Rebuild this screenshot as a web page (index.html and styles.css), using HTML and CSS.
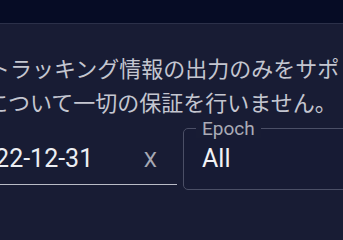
FILE: index.html
```html
<!DOCTYPE html>
<html lang="ja">
<head>
<meta charset="utf-8">
<link rel="stylesheet" href="styles.css">
</head>
<body>
<div class="topbar"></div>
<main class="content">
  <div class="notice">
    <div class="line line-first">ストラッキング情報の出力のみをサポ</div>
    <div class="line line-second">について一切の保証を行いません。</div>
  </div>
  <div class="filters">
    <div class="date-field">
      <span class="date-value">2022-12-31</span>
      <span class="clear">X</span>
    </div>
    <div class="select-box">
      <span class="select-label">Epoch</span>
      <span class="select-value">All</span>
    </div>
  </div>
</main>
</body>
</html>
```
FILE: styles.css
```css
html, body {
  margin: 0;
  padding: 0;
  background: #181c34;
}
body {
  width: 343px;
  height: 213px;
  overflow: hidden;
  font-family: Roboto, "Noto Sans CJK JP", sans-serif;
}
.topbar {
  height: 23px;
  background: #060c25;
  border-bottom: 1px solid #2b3049;
}
.content {
  overflow: hidden;
}
.notice {
  margin-top: 26px;
  font-family: "Noto Sans CJK JP", sans-serif;
  font-size: 22px;
  line-height: 34px;
  color: #c4c6d0;
  white-space: nowrap;
}
.line-first {
  margin-left: -34px;
}
.line-second {
  margin-left: -14px;
}
.filters {
  display: flex;
  align-items: flex-end;
  gap: 6px;
  margin-top: 10px;
}
.date-field {
  flex: none;
  display: flex;
  align-items: baseline;
  justify-content: space-between;
  width: 190px;
  margin-left: -33px;
  padding-right: 20px;
  padding-bottom: 9px;
  margin-bottom: 5px;
  border-bottom: 1px solid #b9bbc6;
}
.date-value {
  font-size: 25px;
  line-height: 30px;
  color: #eceef3;
}
.clear {
  font-size: 21px;
  line-height: 30px;
  color: #a6a8b3;
}
.select-box {
  position: relative;
  flex: none;
  width: 220px;
  padding: 15px 18px;
  border: 1px solid #4b4f66;
  border-radius: 5px;
  background: #171b34;
}
.select-label {
  position: absolute;
  top: -10px;
  left: 12px;
  padding: 0 6px;
  font-size: 19px;
  line-height: 19px;
  color: #a9abb6;
  background: #181c34;
}
.select-value {
  display: block;
  font-size: 25px;
  line-height: 30px;
  color: #f2f2f5;
}
```
